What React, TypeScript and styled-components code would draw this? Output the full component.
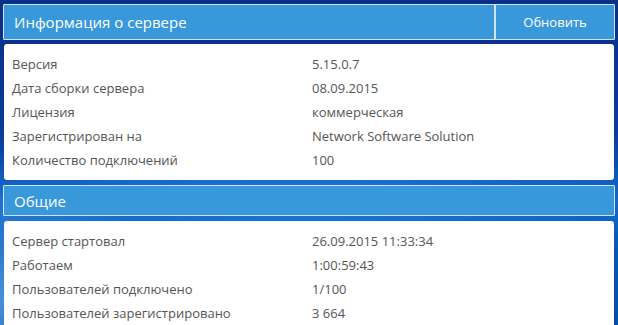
import React from "react";
import styled, { createGlobalStyle } from "styled-components";

const Global = createGlobalStyle`
  html, body { margin: 0; padding: 0; }
  body {
    width: 618px;
    height: 325px;
    overflow: hidden;
    font-family: "Open Sans", "Noto Sans", sans-serif;
    background:
      radial-gradient(ellipse 180px 120px at 0px 300px, rgba(120,200,255,0.55), rgba(120,200,255,0) 100%),
      radial-gradient(ellipse 400px 60px at 300px 200px, rgba(40,140,230,0.6), rgba(40,140,230,0) 100%),
      linear-gradient(180deg, #0a3088 0%, #0b3a98 40%, #0f63c8 62%, #0c56b8 75%, #0a4aa8 100%);
  }
`;

const Page = styled.div`
  display: flex;
  flex-direction: column;
  padding: 4px 3px 0 3px;
`;

const Header = styled.div<{ $tall?: boolean }>`
  display: flex;
  align-items: stretch;
  height: ${(p) => (p.$tall ? 34 : 29)}px;
  background: #3898da;
  border: 1px solid #d4e2ee;
  border-radius: 1px;
  color: #fff;
`;

const Title = styled.div`
  flex: 1;
  display: flex;
  align-items: center;
  padding-left: 10px;
  font-size: 15px;
`;

const RefreshButton = styled.button`
  width: 120px;
  border: none;
  border-left: 2px solid #d4e2ee;
  background: transparent;
  color: #fff;
  font-family: inherit;
  font-size: 13px;
  padding: 0;
  cursor: pointer;
`;

const Panel = styled.div<{ $mt: number }>`
  margin: ${(p) => p.$mt}px 1px 5px 1px;
  background: #fff;
  border-radius: 3px;
  padding: 8px 0;
`;

const Row = styled.div`
  display: grid;
  grid-template-columns: 300px 1fr;
  height: 24px;
  align-items: center;
  padding-left: 8px;
  font-size: 13px;
  color: #555;
`;

const Cell = styled.span``;

const info: [string, string][] = [
  ["Версия", "5.15.0.7"],
  ["Дата сборки сервера", "08.09.2015"],
  ["Лицензия", "коммерческая"],
  ["Зарегистрирован на", "Network Software Solution"],
  ["Количество подключений", "100"],
];

const general: [string, string][] = [
  ["Сервер стартовал", "26.09.2015 11:33:34"],
  ["Работаем", "1:00:59:43"],
  ["Пользователей подключено", "1/100"],
  ["Пользователей зарегистрировано", "3 664"],
];

export default function App() {
  return (
    <>
      <Global />
      <Page>
        <Header $tall>
          <Title>Информация о сервере</Title>
          <RefreshButton>Обновить</RefreshButton>
        </Header>
        <Panel $mt={4}>
          {info.map(([k, v]) => (
            <Row key={k}>
              <Cell>{k}</Cell>
              <Cell>{v}</Cell>
            </Row>
          ))}
        </Panel>
        <Header>
          <Title>Общие</Title>
        </Header>
        <Panel $mt={5}>
          {general.map(([k, v]) => (
            <Row key={k}>
              <Cell>{k}</Cell>
              <Cell>{v}</Cell>
            </Row>
          ))}
        </Panel>
      </Page>
    </>
  );
}
